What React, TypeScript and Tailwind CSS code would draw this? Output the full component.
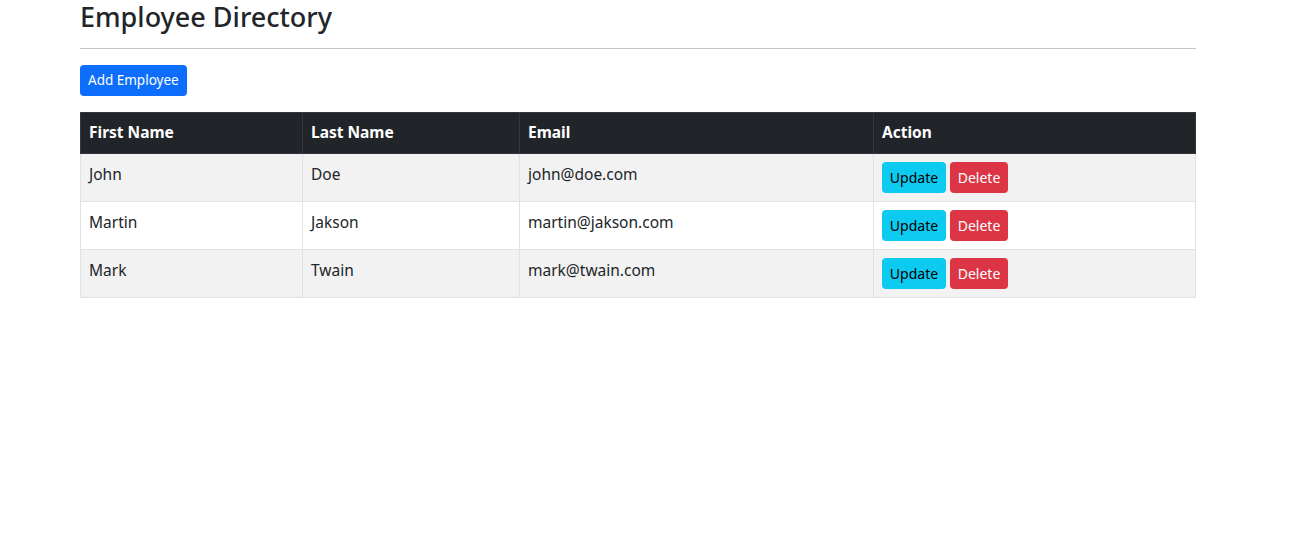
const employees = [
  { firstName: 'John', lastName: 'Doe', email: 'john@doe.com' },
  { firstName: 'Martin', lastName: 'Jakson', email: 'martin@jakson.com' },
  { firstName: 'Mark', lastName: 'Twain', email: 'mark@twain.com' },
];

export default function App() {
  return (
    <div className="min-h-screen bg-white text-[#212529] font-['Noto_Sans',sans-serif]">
      <div className="ml-[80px] w-[1116px]">
        <h2 className="pt-[1px] text-[27px] leading-[32px] font-medium">Employee Directory</h2>
        <hr className="mt-[15px] border-t border-[#c4c4c4]" />

        <div className="mt-[16px]">
          <button className="h-[31px] px-[8px] rounded-[4px] bg-[#0d6efd] text-white text-[13.5px]">
            Add Employee
          </button>
        </div>

        <table className="mt-[16px] w-full border-collapse text-[15.5px]">
          <thead>
            <tr className="bg-[#212529] text-white">
              <th className="w-[222px] h-[41px] px-[8px] text-left font-bold border border-[#32383e]">First Name</th>
              <th className="w-[217px] px-[8px] text-left font-bold border border-[#32383e]">Last Name</th>
              <th className="w-[354px] px-[8px] text-left font-bold border border-[#32383e]">Email</th>
              <th className="px-[8px] text-left font-bold border border-[#32383e]">Action</th>
            </tr>
          </thead>
          <tbody>
            {employees.map((emp, i) => (
              <tr key={emp.email} className={i % 2 === 0 ? 'bg-[#f2f2f2]' : 'bg-white'}>
                <td className="h-[48px] px-[8px] py-[8px] align-top leading-[24px] border border-[#dee2e6]">{emp.firstName}</td>
                <td className="px-[8px] py-[8px] align-top leading-[24px] border border-[#dee2e6]">{emp.lastName}</td>
                <td className="px-[8px] py-[8px] align-top leading-[24px] border border-[#dee2e6]">{emp.email}</td>
                <td className="px-[8px] py-[8px] align-top border border-[#dee2e6]">
                  <div className="flex gap-[4px]">
                    <button className="h-[31px] w-[64px] rounded-[4px] bg-[#0dcaf0] text-black text-[14px]">Update</button>
                    <button className="h-[31px] w-[58px] rounded-[4px] bg-[#dc3545] text-white text-[14px]">Delete</button>
                  </div>
                </td>
              </tr>
            ))}
          </tbody>
        </table>
      </div>
    </div>
  );
}
